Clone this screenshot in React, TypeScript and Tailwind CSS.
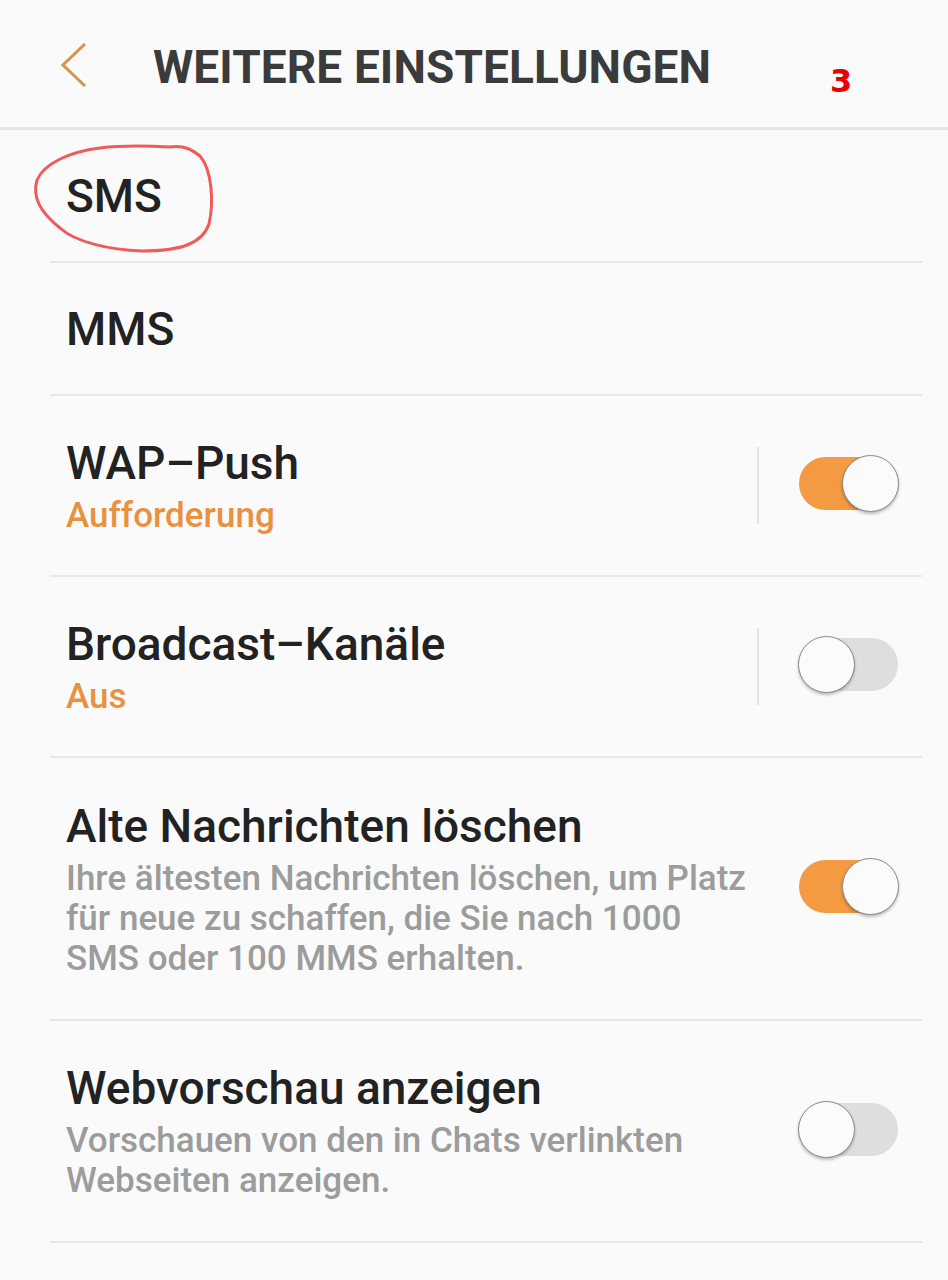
import React from 'react';

type Row = {
  title: string;
  sub?: string;
  desc?: string;
  toggle?: 'on' | 'off';
  divider?: boolean;
  height: string;
};

const rows: Row[] = [
  { title: 'SMS', height: 'h-[133px]' },
  { title: 'MMS', height: 'h-[133px]' },
  { title: 'WAP–Push', sub: 'Aufforderung', toggle: 'on', divider: true, height: 'h-[181px]' },
  { title: 'Broadcast–Kanäle', sub: 'Aus', toggle: 'off', divider: true, height: 'h-[181px]' },
  {
    title: 'Alte Nachrichten löschen',
    desc: 'Ihre ältesten Nachrichten löschen, um Platz\nfür neue zu schaffen, die Sie nach 1000\nSMS oder 100 MMS erhalten.',
    toggle: 'on',
    height: 'h-[263px]',
  },
  {
    title: 'Webvorschau anzeigen',
    desc: 'Vorschauen von den in Chats verlinkten\nWebseiten anzeigen.',
    toggle: 'off',
    height: 'h-[222px]',
  },
];

const Toggle: React.FC<{ on: boolean }> = ({ on }) => (
  <div className="relative w-[101px] h-[57px] -mt-[4px] shrink-0">
    <div
      className={
        on
          ? 'absolute left-[1px] top-[2px] w-[96px] h-[53px] rounded-full bg-[#f49a43]'
          : 'absolute left-[2px] top-[2px] w-[98px] h-[53px] rounded-full bg-[#dedede]'
      }
    />
    <div
      className={
        on
          ? 'absolute left-[44px] top-0 w-[57px] h-[57px] rounded-full bg-[#fbfbfb] border border-[#8a8a8a] shadow-[0_2px_3px_rgba(0,0,0,0.25)]'
          : 'absolute left-0 top-0 w-[57px] h-[57px] rounded-full bg-[#fbfbfb] border border-[#8a8a8a] shadow-[0_2px_3px_rgba(0,0,0,0.25)]'
      }
    />
  </div>
);

const App: React.FC = () => {
  return (
    <div className="relative min-h-screen w-[948px] bg-[#fafafa] font-['Roboto',sans-serif]">
      {/* Header */}
      <div className="flex items-start h-[130px] pl-[61px] border-b-[3px] border-[#e6e6e6]">
        <svg width="26" height="44" viewBox="0 0 26 44" className="mt-[43px] shrink-0">
          <polyline points="24,1 2,22 24,43" fill="none" stroke="#d6944e" strokeWidth="3" />
        </svg>
        <h1 className="ml-[66px] mt-[40px] text-[46px] leading-[54px] font-bold text-[#3b3b3b] tracking-[0.1px]">
          WEITERE EINSTELLUNGEN
        </h1>
      </div>

      {/* annotation: number */}
      <span className="absolute left-[830px] top-[65px] text-[32px] leading-[32px] font-bold text-[#e80000] font-['DejaVu_Sans',sans-serif]">
        3
      </span>

      {/* List */}
      <div className="ml-[50px] mr-[26px]">
        {rows.map((row) => (
          <div
            key={row.title}
            className={`flex items-center pl-[16px] pr-[23px] border-b-2 border-[#e8e8e8] ${row.height}`}
          >
            <div className="flex-1 min-w-0">
              <div className="text-[46px] leading-[54px] font-medium text-[#222222]">{row.title}</div>
              {row.sub && (
                <div className="mt-[6px] text-[35px] leading-[40px] font-medium text-[#e8923f]">{row.sub}</div>
              )}
              {row.desc && (
                <div className="mt-[6px] text-[35px] leading-[40px] font-medium text-[#9c9c9c] whitespace-pre-line">
                  {row.desc}
                </div>
              )}
            </div>
            {row.toggle && (
              <div className="flex items-center">
                {row.divider && <div className="w-[2px] h-[77px] bg-[#e4e4e4] mr-[39px]" />}
                <Toggle on={row.toggle === 'on'} />
              </div>
            )}
          </div>
        ))}
      </div>

      {/* annotation: red circle around SMS */}
      <svg
        width="190"
        height="115"
        viewBox="0 0 190 115"
        className="absolute left-[30px] top-[142px] overflow-visible"
      >
        <path
          d="M 140 5 C 155 3, 162 8, 170 14 C 182 28, 184 60, 179 82 C 172 102, 150 109, 112 109 C 80 108, 45 100, 30 86 C 10 70, 2 55, 7 38 C 14 22, 38 10, 70 6 C 95 3, 120 4, 140 5 Z"
          fill="none"
          stroke="#ef5b5b"
          strokeWidth="3"
        />
      </svg>
    </div>
  );
};

export default App;
